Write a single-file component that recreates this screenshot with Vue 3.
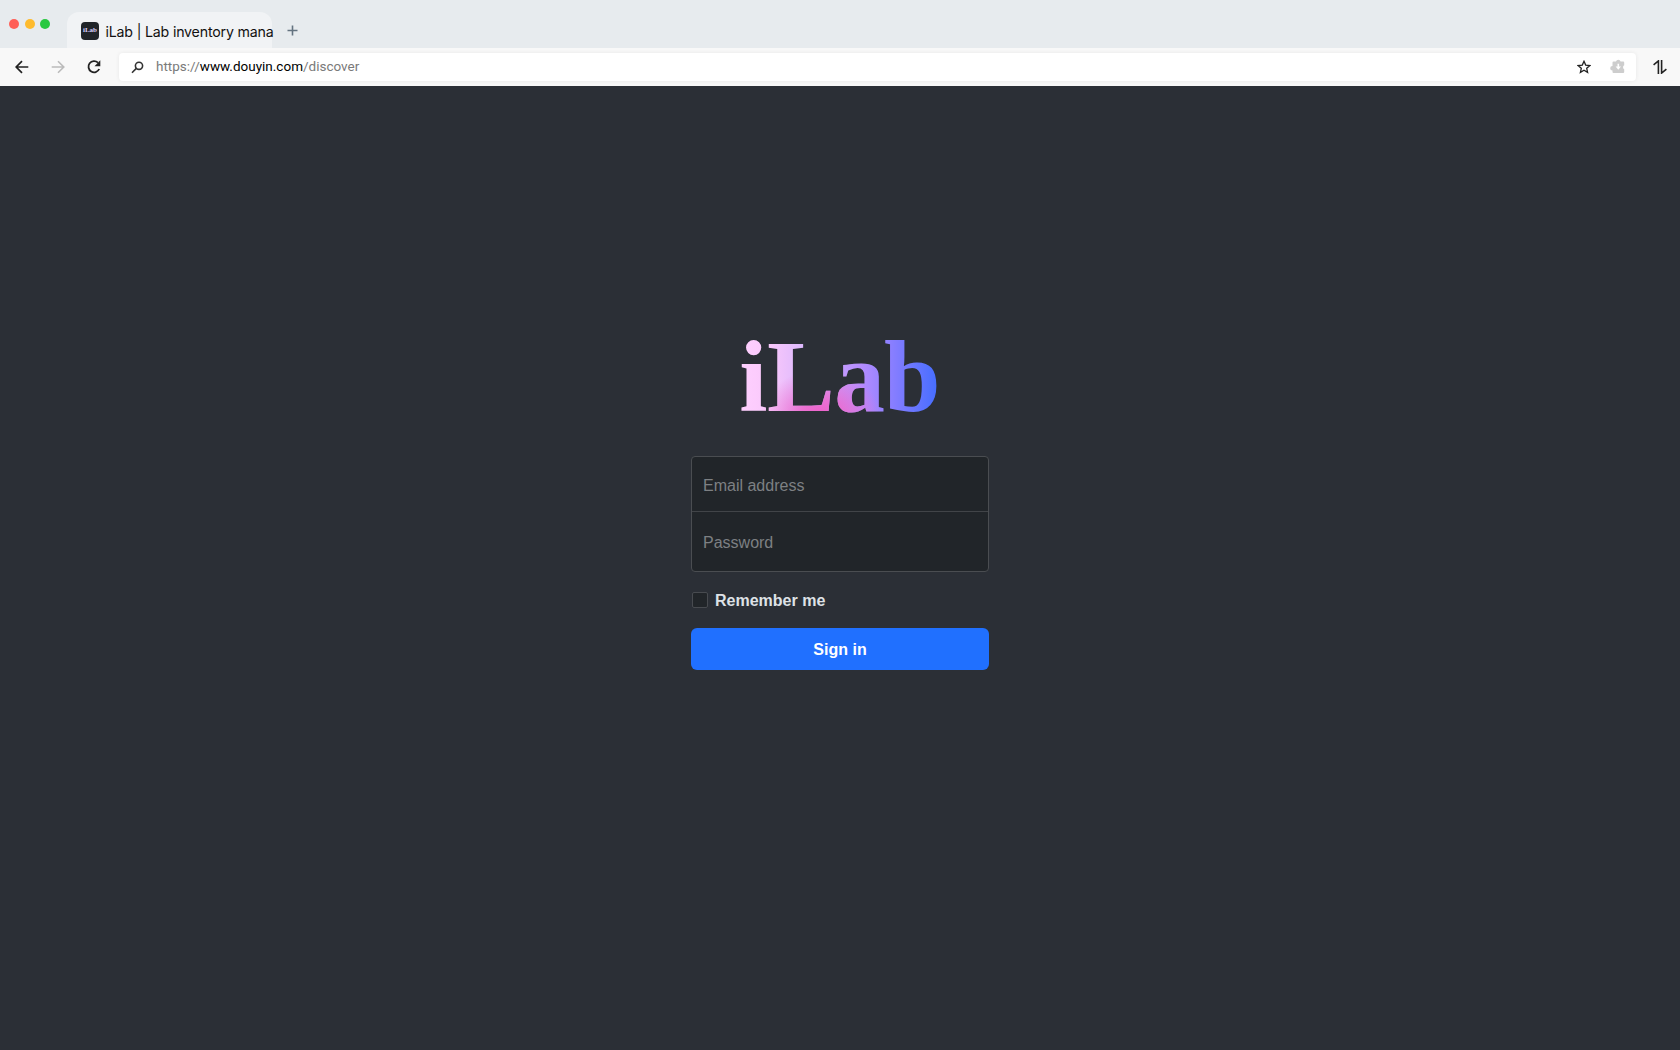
<script setup>
const lights = ['#ff5f57', '#febb2e', '#28c840']
const letters = [
  { ch: 'i', x: 5.2 },
  { ch: 'L', x: 33 },
  { ch: 'a', x: 100.2 },
  { ch: 'b', x: 150 },
]
</script>

<template>
  <div class="window">
    <header class="tabs">
      <div class="lights">
        <i v-for="c in lights" :key="c" :style="{ background: c }"></i>
      </div>
      <div class="tab">
        <span class="favicon">iLab</span>
        <span class="title">iLab | Lab inventory mana</span>
      </div>
      <svg class="plus" width="11" height="11" viewBox="0 0 11 11"><path d="M5.5 .5v10M.5 5.5h10" stroke="#647380" stroke-width="1.6" /></svg>
    </header>
    <nav class="toolbar">
      <svg class="back" width="14" height="14" viewBox="0 0 14 14" fill="none" stroke="#222" stroke-width="1.7"><path d="M13.3 7H1.5M7 1.2L1.2 7 7 12.8" /></svg>
      <svg class="forward" width="14" height="14" viewBox="0 0 14 14" fill="none" stroke="#bbb" stroke-width="1.6"><path d="M.7 7h11.8M7 1.2L12.8 7 7 12.8" /></svg>
      <svg class="reload" width="14" height="14" viewBox="0 0 14 14"><path d="M11 2.7A5.6 5.6 0 1 0 12.2 9" fill="none" stroke="#222" stroke-width="1.8" /><path d="M13.3 .3v6H7.5z" fill="#222" /></svg>
      <div class="address">
        <svg class="search" width="13" height="13" viewBox="0 0 13 13" fill="none" stroke="#333" stroke-width="1.6"><circle cx="8" cy="4.8" r="3.6" /><path d="M5.3 7.4L1 11.7" /></svg>
        <span class="url">https://<b>www.douyin.com</b>/discover</span>
        <svg class="star" width="14" height="14" viewBox="0 0 14 14" fill="none" stroke="#222" stroke-width="1.3"><path d="M7 1.3l1.7 3.8 4.2.4-3.2 2.8.9 4.1L7 10.3l-3.6 2.1.9-4.1-3.2-2.8 4.2-.4z" /></svg>
        <svg class="ext" width="15" height="15" viewBox="0 0 15 15"><path d="M3.500 2.500H6a2.400 2.400 0 0 1 4.600 0h2.600a1 1 0 0 1 1 1v2.700a2.300 2.300 0 0 0 0 4v2.800a1 1 0 0 1-1 1H3.500a1 1 0 0 1-1-1v-1.400a2.300 2.300 0 0 1 0-4.600V3.500a1 1 0 0 1 1-1z" fill="#cdcdcd" /><path d="M7.500 4.800h1.600v2.700h1.900L8.300 10.700 5.600 7.500h1.900z" fill="#fff" /></svg>
      </div>
      <svg class="sort" width="14" height="14" viewBox="0 0 14 14" fill="none" stroke="#222" stroke-width="1.6"><path d="M.6 4.800L5.400 .9V14M8.600 0v13.100L13.400 9.200" /></svg>
    </nav>
    <main>
      <svg class="logo" width="212" height="130" viewBox="0 0 212 130" role="img">
        <defs>
          <linearGradient id="base" x1="5" y1="0" x2="208" y2="0" gradientUnits="userSpaceOnUse">
            <stop offset="0" stop-color="#ffd0ff" />
            <stop offset=".15" stop-color="#f9c8fb" />
            <stop offset=".32" stop-color="#dcb8fd" />
            <stop offset=".6" stop-color="#b58cff" />
            <stop offset=".78" stop-color="#817cff" />
            <stop offset="1" stop-color="#3f6cff" />
          </linearGradient>
          <radialGradient id="glow" cx="0" cy="0" r="1" gradientUnits="userSpaceOnUse" gradientTransform="translate(87 109) scale(60 48)">
            <stop offset="0" stop-color="#ee5fc9" />
            <stop offset=".35" stop-color="#ee66cc" stop-opacity=".85" />
            <stop offset="1" stop-color="#ee70d0" stop-opacity="0" />
          </radialGradient>
        </defs>
        <text y="103" fill="url(#base)"><tspan v-for="l in letters" :key="l.ch" :x="l.x">{{ l.ch }}</tspan></text>
        <text y="103" fill="url(#glow)" aria-hidden="true"><tspan v-for="l in letters" :key="l.ch" :x="l.x">{{ l.ch }}</tspan></text>
      </svg>
      <form @submit.prevent>
        <div class="fields">
          <input type="email" placeholder="Email address" />
          <input type="password" placeholder="Password" />
        </div>
        <label><input type="checkbox" /><span>Remember me</span></label>
        <button>Sign in</button>
      </form>
    </main>
  </div>
</template>

<style>
body { margin: 0; overflow: hidden; }
</style>
<style scoped>
.window { width: 1680px; height: 1050px; display: flex; flex-direction: column; background: #2b2f36; font-family: "Liberation Sans", Arial, sans-serif; }
.tabs { height: 48px; flex: none; display: flex; background: #e7ebee; }
.lights { display: flex; gap: 5.500px; padding: 19px 0 0 9px; width: 67px; flex: none; box-sizing: border-box; }
.lights i { width: 10px; height: 10px; border-radius: 50%; flex: none; }
.tab { width: 205px; height: 36px; flex: none; margin-top: 12px; border-radius: 12px 12px 0 0; background: #f1f3f5; display: flex; align-items: center; box-sizing: border-box; padding: 2px 0 0 14px; }
.favicon { width: 18px; height: 18px; border-radius: 4px; background: #212529; color: #dcd0ff; font: bold 7px/17px "Liberation Serif", serif; text-align: center; flex: none; }
.title { margin-left: 6.500px; padding-top: 2px; font: 14.200px/20px Inter, sans-serif; letter-spacing: -.19px; color: #111; white-space: nowrap; }
.plus { margin: 24.500px 0 0 15px; }
.toolbar { height: 38px; flex: none; background: #f8f8f8; display: flex; align-items: center; }
.back { margin-left: 15px; }
.forward { margin-left: 22px; }
.reload { margin-left: 22px; }
.address { margin-left: 18px; width: 1517px; flex: none; height: 28px; border-radius: 4px; background: #fff; box-shadow: 0 0 4px rgba(0,0,0,.07); display: flex; align-items: center; box-sizing: border-box; }
.search { margin-left: 12px; }
.url { margin-left: 12px; padding-bottom: 2px; font: 13.500px/20px Roboto, sans-serif; color: #7a7a7a; flex: 1; }
.url b { font-weight: 400; color: #000; }
.ext { margin: 0 11px 1px 19px; }
.sort { margin-left: 17px; }
main { flex: 1; display: flex; flex-direction: column; align-items: center; }
.logo { margin-top: 222px; font: bold 101.500px "Liberation Serif", serif; }
form { width: 298px; margin-top: 18px; display: flex; flex-direction: column; }
.fields { height: 116px; box-sizing: border-box; border: 1px solid #4a4d51; border-radius: 4px; background: #212529; overflow: hidden; display: flex; flex-direction: column; }
.fields input { height: 55px; flex: none; box-sizing: border-box; border: 0; border-bottom: 1px solid #414448; background: transparent; padding: 4px 11px 0; font: 16px "Liberation Sans", sans-serif; outline: 0; }
.fields input:last-child { height: 59px; border: 0; padding-top: 2px; }
.fields input::placeholder { color: #7d8083; opacity: 1; }
label { display: flex; align-items: center; height: 24px; margin-top: 16px; color: #dee2e6; font-weight: bold; font-size: 16px; }
label span { padding-top: 2px; }
label input { appearance: none; width: 16px; height: 16px; margin: 0 7px 0 1px; border: 1px solid #484b50; border-radius: 2px; background: #212529; }
button { height: 42px; margin-top: 16px; padding-top: 3px; border: 0; border-radius: 6px; background: #2070ff; color: #fff; font: bold 16px "Liberation Sans", sans-serif; }
</style>
